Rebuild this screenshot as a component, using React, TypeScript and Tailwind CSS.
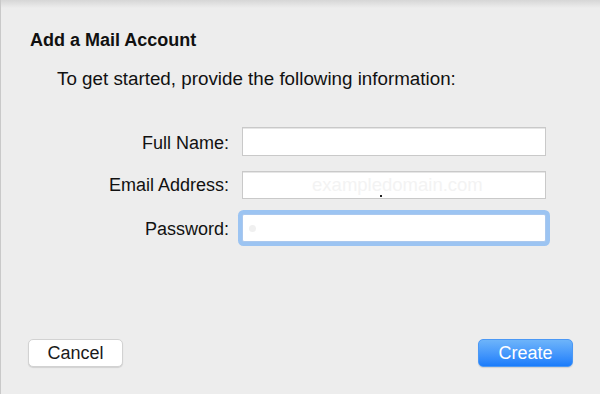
import React from "react";

export default function App() {
  return (
    <div
      className="relative flex h-[394px] w-[600px] flex-col overflow-hidden border-l border-[#c9c9c9] bg-[#ededed] text-[#111]"
      style={{ fontFamily: '"Liberation Sans", Arial, sans-serif' }}
    >
      <div className="pointer-events-none absolute inset-x-0 top-0 h-[8px] bg-gradient-to-b from-[#d6d6d6] to-transparent" />

      <h1 className="pl-[29px] pt-[29px] text-[18px] font-bold leading-[22px]">Add a Mail Account</h1>

      <p className="mt-[17px] pl-[56px] text-[18.8px] leading-[22px]">
        To get started, provide the following information:
      </p>

      <div className="mt-[37px] flex flex-col gap-[15px]">
        <div className="flex h-[29px] items-center gap-[13px]">
          <label className="mt-[3px] w-[228px] text-right text-[18px] leading-[22px]">Full Name:</label>
          <div className="h-full w-[304px] border border-[#c9c9c9] bg-white shadow-[inset_0_1px_0_#e6e6e6]" />
        </div>

        <div className="flex h-[28px] items-center gap-[13px]">
          <label className="w-[228px] text-right text-[18px] leading-[22px]">Email Address:</label>
          <div className="relative flex h-full w-[304px] items-center border border-[#c9c9c9] bg-white pl-[4px] text-[18.5px] leading-[22px] shadow-[inset_0_1px_0_#e6e6e6]">
            <span className="text-white">name@</span>
            <span className="text-[#f3f3f3]">exampledomain.com</span>
            <span className="absolute left-[137px] top-[23px] h-[2px] w-[2px] bg-[#222]" />
          </div>
        </div>

        <div className="flex h-[28px] items-center gap-[13px]">
          <label className="mt-[2px] w-[228px] text-right text-[18px] leading-[22px]">Password:</label>
          <div className="relative flex h-full w-[304px] items-center rounded-[2px] border border-[#aac8ee] bg-white pl-[6px] shadow-[0_0_0_4px_#9cc4f2]">
            <span className="h-[7px] w-[7px] rounded-full bg-[#f0f0f0]" />
          </div>
        </div>
      </div>

      <div className="flex-1" />

      <div className="flex items-center justify-between pb-[27px] pl-[27px] pr-[27px]">
        <button className="flex h-[28px] w-[95px] items-center justify-center rounded-[5px] border border-[#d2d2d2] bg-white text-[18px] leading-[22px] text-[#1a1a1a] shadow-[0_1px_1px_rgba(0,0,0,0.12)]">
          Cancel
        </button>
        <button className="flex h-[28px] w-[95px] items-center justify-center rounded-[5px] border border-[#4b98f5] bg-gradient-to-b from-[#6db4fa] to-[#1a7cfb] text-[18px] leading-[22px] text-white shadow-[0_1px_1px_rgba(0,0,0,0.12)]">
          Create
        </button>
      </div>
    </div>
  );
}
